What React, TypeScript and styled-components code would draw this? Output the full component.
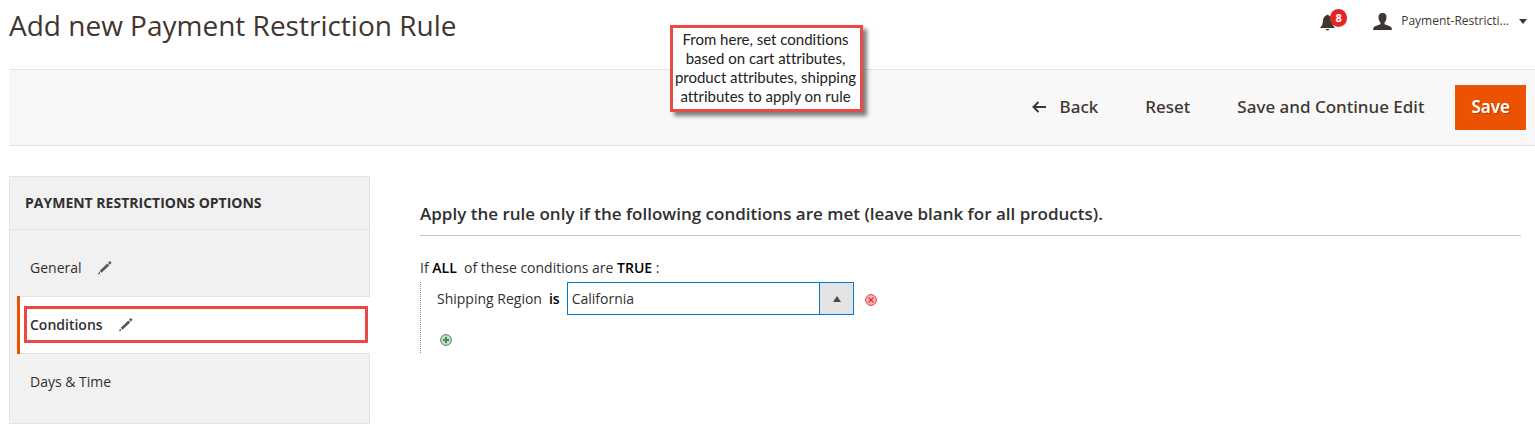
import React from "react";
import styled, { createGlobalStyle, css } from "styled-components";

const GlobalStyle = createGlobalStyle`
  *, *::before, *::after { box-sizing: border-box; }
  body {
    margin: 0;
    background: #fff;
    color: #303030;
    font-family: "Open Sans", "Noto Sans", sans-serif;
    font-size: 14px;
    line-height: 20px;
  }
  button, select { font: inherit; color: inherit; }
  h1, h2, ul { margin: 0; padding: 0; }
`;

const Page = styled.div`
  position: relative;
  padding-left: 9px;
`;

const Header = styled.header`
  display: flex;
  justify-content: space-between;
  height: 69px;
  padding-right: 8px;
`;

const Title = styled.h1`
  padding-top: 5px;
  color: #41362f;
  font-size: 28px;
  font-weight: 400;
  line-height: 40px;
`;

const HeaderTools = styled.div`
  display: flex;
  align-items: center;
  height: 42px;
`;

const BareButton = styled.button`
  display: inline-flex;
  align-items: center;
  border: 0;
  padding: 0;
  background: none;
  cursor: pointer;
`;

const Notifications = styled(BareButton)`
  position: relative;
  margin: 2px 38px 0 0;
  color: #41362f;
`;

const Badge = styled.span`
  position: absolute;
  top: -5px;
  left: 10px;
  width: 17px;
  height: 18px;
  border-radius: 9px;
  background: #e22626;
  color: #fff;
  font-size: 11px;
  font-weight: 700;
  line-height: 18px;
  text-align: center;
`;

const Account = styled(BareButton)`
  color: #41362f;
  font-size: 12px;
`;

const AccountName = styled.span`
  margin: 0 10px 0 9px;
`;

const ActionBar = styled.div`
  display: flex;
  align-items: center;
  justify-content: flex-end;
  height: 77px;
  border: solid #e3e3e3;
  border-width: 1px 0;
  padding-right: 9px;
  background: #f8f8f8;
`;

const ActionButton = styled(BareButton)<{ $primary?: boolean }>`
  height: 45px;
  margin-left: 15px;
  padding: 0 16px 1px;
  color: #41362f;
  font-family: "Noto Sans", "Open Sans", sans-serif;
  font-size: 17px;
  font-weight: 500;
  ${(p) =>
    p.$primary &&
    css`
      background: #eb5202;
      color: #fff;
      font-weight: 600;
      text-shadow: 1px 1px 0 rgba(0, 0, 0, 0.25);
    `}
  svg { margin-right: 14px; }
`;

const Columns = styled.main`
  display: flex;
  align-items: flex-start;
  gap: 50px;
  padding: 30px 14px 0 0;
`;

const SidePanel = styled.nav`
  flex: 0 0 361px;
  border: 1px solid #e3e3e3;
  border-right: 0;
  background: #f1f1f1;
`;

const PanelTitle = styled.h2`
  border-right: 1px solid #e3e3e3;
  border-bottom: 1px solid #e3e3e3;
  padding: 16px 15px;
  font-size: 14px;
  font-weight: 700;
  line-height: 20px;
`;

const TabList = styled.ul`
  list-style: none;
`;

const Tab = styled.li<{ $active?: boolean; $place?: "first" | "last" }>`
  padding: 18px 0 18px 20px;
  border-right: 1px solid #e3e3e3;
  ${(p) => p.$place === "first" && "padding-top: 28px;"}
  ${(p) => p.$place === "last" && "padding-bottom: 31px;"}
  ${(p) =>
    p.$active &&
    css`
      position: relative;
      margin-left: 7px;
      border: solid #e3e3e3;
      border-width: 1px 0;
      padding: 9px 2px 10px 7px;
      background: #fff;
      font-weight: 600;
      &::before {
        content: "";
        position: absolute;
        inset: -1px auto -1px 0;
        width: 3px;
        background: #eb5202;
      }
    `}
`;

const TabLink = styled.a<{ $marked?: boolean }>`
  display: flex;
  align-items: center;
  gap: 16px;
  color: #303030;
  text-decoration: none;
  ${(p) =>
    p.$marked &&
    css`
      border: 3px solid #ea4a45;
      padding: 6px 3px 5px;
    `}
`;

const Conditions = styled.section`
  flex: 1;
  min-width: 0;
  padding-top: 24px;
`;

const Legend = styled.h2`
  border-bottom: 1px solid #cac3b4;
  padding-bottom: 8px;
  color: #303030;
  font-size: 17px;
  font-weight: 600;
  line-height: 27px;
`;

const RuleText = styled.p`
  margin: 22px 0 4px;
  white-space: pre;
`;

const Strong = styled.b`
  color: #000;
  font-weight: 600;
`;

const RuleTree = styled.div`
  display: flex;
  flex-direction: column;
  align-items: flex-start;
  border-left: 1px dotted #888;
  padding: 0 0 7px 16px;
`;

const RuleRow = styled.div`
  display: flex;
  align-items: center;
  gap: 7px;
  margin-bottom: 19px;
`;

const SelectBox = styled.div`
  position: relative;
`;

const RegionSelect = styled.select`
  display: block;
  appearance: none;
  width: 287px;
  height: 33px;
  border: 1px solid #007bdb;
  border-radius: 0;
  padding: 0 38px 0 4px;
  background: linear-gradient(90deg, #007bdb 1px, #e3e3e3 1px) right / 34px 100% no-repeat #fff;
  outline: 0;
`;

const SelectArrow = styled.svg`
  position: absolute;
  top: 14px;
  right: 13px;
  pointer-events: none;
`;

const RemoveButton = styled(BareButton)`
  margin: 3px 0 0 4px;
`;

const AddButton = styled(BareButton)`
  margin-left: 3px;
`;

const Callout = styled.aside`
  position: absolute;
  top: 25px;
  left: 670px;
  width: 193px;
  border: 3px solid #ea4a45;
  padding: 2px 2px 3px 0;
  background: #fff;
  box-shadow: 4px 4px 4px rgba(0, 0, 0, 0.5);
  color: #222;
  font-family: Lato, "Open Sans", sans-serif;
  font-size: 15px;
  font-variant-ligatures: none;
  line-height: 19px;
  text-align: center;
  white-space: pre;
`;

const BellIcon = () => (
  <svg width="15" height="17" viewBox="0 0 15 17" fill="currentColor" aria-hidden="true">
    <path d="M6 1.5Q7.500 0 9 1.500Q12 3 12 7Q12 11 15 14H0Q3 11 3 7Q3 3 6 1.500ZM5.500 15H9.500Q7.500 18 5.500 15Z" />
  </svg>
);

const PersonIcon = () => (
  <svg width="19" height="17" viewBox="0 0 19 17" fill="currentColor" aria-hidden="true">
    <path d="M9.500 0C12.500 0 13.600 1.500 13.500 4.500C13.400 7 12.500 8.500 11.500 9.500V11.200L17 13.200Q19 14 19 17H0Q0 14 2 13.200L7.500 11.200V9.500C6.500 8.500 5.600 7 5.500 4.500C5.400 1.500 6.500 0 9.500 0Z" />
  </svg>
);

const CaretIcon = () => (
  <svg width="8" height="5" viewBox="0 0 8 5" fill="currentColor" aria-hidden="true">
    <path d="M0 0H8L4 5Z" />
  </svg>
);

const ArrowIcon = () => (
  <svg width="14" height="12" viewBox="0 0 14 12" fill="none" stroke="currentColor" strokeWidth="2" aria-hidden="true">
    <path d="M14 6H2M6.500 1L1.500 6L6.500 11" />
  </svg>
);

const PencilIcon = () => (
  <svg width="14" height="14" viewBox="0 0 14 14" fill="#5b5b5b" aria-hidden="true">
    <path d="M0 13.500L1 10.500L2.500 12.400ZM1.700 9.700L9.300 2.500L11.300 4.500L3.500 11.800ZM10 1.800L11.500 0.300Q12 0 12.500 0.500L13.300 1.300Q13.600 1.800 13.200 2.300L11.900 3.800Z" />
  </svg>
);

const RemoveIcon = () => (
  <svg width="12" height="12" viewBox="0 0 12 12" fill="none" aria-hidden="true">
    <circle cx="6" cy="6" r="5.400" fill="#f9b5b3" stroke="#e2403c" />
    <path d="M3.500 3.500L8.500 8.500M8.500 3.500L3.500 8.500" stroke="#dc3a36" strokeWidth="1.300" />
  </svg>
);

const AddIcon = () => (
  <svg width="12" height="12" viewBox="0 0 12 12" fill="none" aria-hidden="true">
    <circle cx="6" cy="6" r="5.400" fill="#c6dcc6" stroke="#5c8562" />
    <path d="M6 3V9M3 6H9" stroke="#3f8f52" strokeWidth="2" />
  </svg>
);

export default function App() {
  return (
    <>
      <GlobalStyle />
      <Page>
        <Header>
          <Title>Add new Payment Restriction Rule</Title>
          <HeaderTools>
            <Notifications type="button" aria-label="Notifications">
              <BellIcon />
              <Badge>8</Badge>
            </Notifications>
            <Account type="button">
              <PersonIcon />
              <AccountName>Payment-Restricti...</AccountName>
              <CaretIcon />
            </Account>
          </HeaderTools>
        </Header>
        <ActionBar>
          <ActionButton type="button"><ArrowIcon />Back</ActionButton>
          <ActionButton type="button">Reset</ActionButton>
          <ActionButton type="button">Save and Continue Edit</ActionButton>
          <ActionButton type="button" $primary>Save</ActionButton>
        </ActionBar>
        <Columns>
          <SidePanel>
            <PanelTitle>PAYMENT RESTRICTIONS OPTIONS</PanelTitle>
            <TabList>
              <Tab $place="first">
                <TabLink href="#general">General<PencilIcon /></TabLink>
              </Tab>
              <Tab $active>
                <TabLink href="#conditions" $marked aria-current="page">Conditions<PencilIcon /></TabLink>
              </Tab>
              <Tab $place="last">
                <TabLink href="#days-time">Days &amp; Time</TabLink>
              </Tab>
            </TabList>
          </SidePanel>
          <Conditions>
            <Legend>Apply the rule only if the following conditions are met (leave blank for all products).</Legend>
            <RuleText>If <Strong>ALL</Strong>{"  "}of these conditions are <Strong>TRUE</Strong> :</RuleText>
            <RuleTree>
              <RuleRow>
                <label htmlFor="region">Shipping Region</label>
                <Strong>is</Strong>
                <SelectBox>
                  <RegionSelect id="region" defaultValue="California">
                    <option>California</option>
                  </RegionSelect>
                  <SelectArrow width="8" height="6" viewBox="0 0 8 6" fill="#514943" aria-hidden="true">
                    <path d="M4 0L8 6H0Z" />
                  </SelectArrow>
                </SelectBox>
                <RemoveButton type="button" aria-label="Remove"><RemoveIcon /></RemoveButton>
              </RuleRow>
              <AddButton type="button" aria-label="Add"><AddIcon /></AddButton>
            </RuleTree>
          </Conditions>
        </Columns>
        <Callout>
          {"From here, set conditions\nbased on cart attributes,\nproduct attributes, shipping\nattributes to apply on rule"}
        </Callout>
      </Page>
    </>
  );
}
